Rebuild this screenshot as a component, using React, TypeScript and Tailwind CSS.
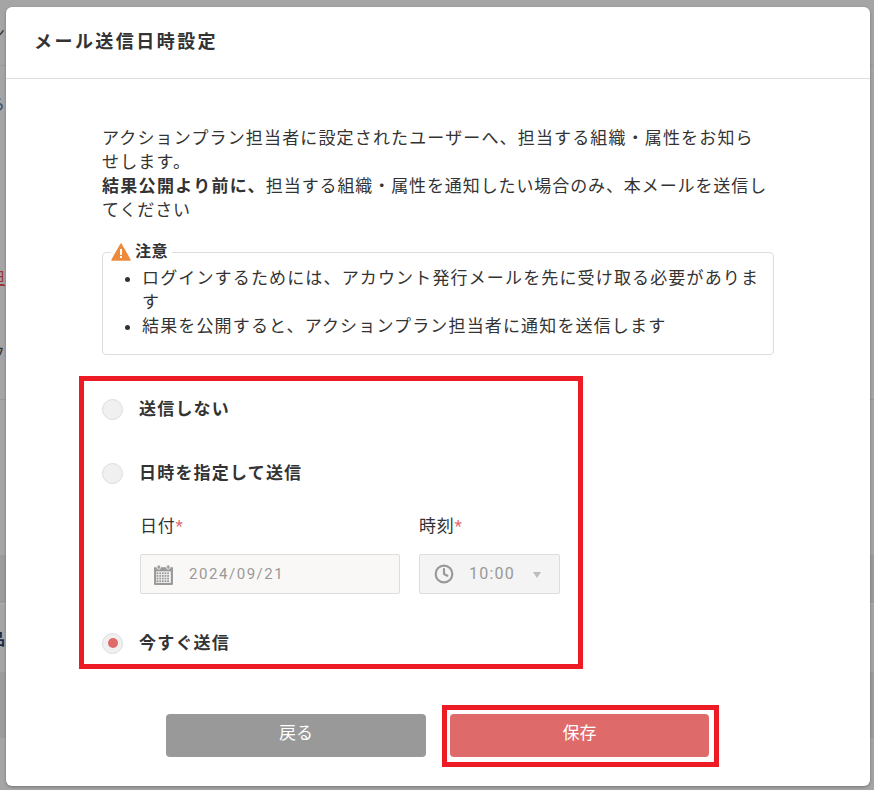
import React from 'react';
import { Clock } from 'lucide-react';

const font = 'font-["Roboto","Noto_Sans_CJK_JP",sans-serif]';

const Radio = ({ label, checked }: { label: string; checked?: boolean }) => (
  <div className="flex items-center">
    <span className="flex h-[21px] w-[21px] items-center justify-center rounded-full border border-[#dddddd] bg-[#f0f0f0]">
      {checked && <span className="h-[10px] w-[10px] rounded-full bg-[#df6a6a]" />}
    </span>
    <span className="ml-[16px] text-[17px] font-bold leading-[24px] tracking-[1.2px] text-[#333333]">{label}</span>
  </div>
);

const CalendarIcon = () => (
  <svg width="21" height="21" viewBox="0 0 20 20" className="shrink-0">
    <path d="M1 3h18v16a1 1 0 0 1-1 1H2a1 1 0 0 1-1-1z" fill="#999999" />
    <rect x="4" y="1" width="3" height="4" rx="1.2" fill="#999999" stroke="#f9f8f7" strokeWidth="0.8" />
    <rect x="13" y="1" width="3" height="4" rx="1.2" fill="#999999" stroke="#f9f8f7" strokeWidth="0.8" />
    <rect x="3" y="7" width="14" height="11" fill="#f4f4f4" />
    {[8, 10.5, 13, 15.5].map(y =>
      [3.5, 6, 8.5, 11, 13.5].map(x => <rect key={`${x}-${y}`} x={x} y={y} width="1.7" height="1.7" fill="#999999" />)
    )}
  </svg>
);

export default function App() {
  return (
    <div className={`relative h-[790px] w-[874px] overflow-hidden bg-[#a5a5a5] pt-[7px] ${font}`}>
      {/* page behind the dialog */}
      <div className="absolute left-0 top-[65px] h-px w-full bg-[#999999]" />
      <div className="absolute left-0 top-[399px] h-px w-full bg-[#999999]" />
      <div className="absolute left-0 top-[555px] h-[49px] w-full bg-[#9b9b9b]" />
      <div className="absolute left-0 top-[603px] h-px w-full bg-[#b0b0b0]" />
      <div className="absolute left-0 top-[672px] h-[66px] w-full bg-[#9c9c9c]" />
      <span className="absolute left-[-11px] top-[24px] text-[16px] leading-[20px] text-[#333333]">ン</span>
      <span className="absolute left-[-11px] top-[95px] text-[16px] leading-[20px] text-[#2b4a6b]">ら</span>
      <span className="absolute left-[-11px] top-[269px] text-[16px] leading-[20px] text-[#a03333] underline">担</span>
      <span className="absolute left-[-11px] top-[344px] text-[16px] leading-[20px] text-[#333333]">フ</span>
      <span className="absolute left-[-11px] top-[630px] text-[16px] font-bold leading-[20px] text-[#1e2a44]">品</span>

      <div className="relative ml-[6px] flex h-[779px] w-[864px] flex-col rounded-[6px] bg-white shadow-[0_1px_3px_rgba(0,0,0,0.3)]">
        <div className="flex h-[72px] shrink-0 items-center border-b border-[#dddddd] pb-[2px] pl-[28px]">
          <h1 className="text-[18px] font-bold tracking-[2.45px] text-[#333333]">メール送信日時設定</h1>
        </div>

        <div className="flex flex-1 flex-col pl-[96px] pr-[96px] pt-[47px]">
          <p className="w-[666px] text-[17px] leading-[24px] tracking-[1.15px] text-[#333333]">
            アクションプラン担当者に設定されたユーザーへ、担当する組織・属性をお知らせします。
            <br />
            <b className="tracking-[1.3px]">結果公開より前に、</b>
            <span className="tracking-[0.9px]">担当する組織・属性を通知したい場合のみ、本メールを送信してください</span>
          </p>

          <fieldset className="mt-[21px] h-[112px] rounded-[4px] border border-[#dddddd] pl-[8px] pr-[8px]">
            <legend className="flex h-[18px] items-center pr-[4px] text-[16px] font-bold leading-[18px] tracking-[0.5px] text-[#333333]">
              <svg width="20" height="18" viewBox="0 0 20 18" className="mr-[4px]">
                <path d="M10 1 L19 17 H1 Z" fill="#ee8a3c" stroke="#ee8a3c" strokeWidth="1.5" strokeLinejoin="round" />
                <rect x="9" y="6" width="2" height="6" fill="#ffffff" />
                <rect x="9" y="13" width="2" height="2" fill="#ffffff" />
              </svg>
              注意
            </legend>
            <ul className="mt-[5px] list-disc pl-[31px] text-[17px] leading-[24px] tracking-[1.15px] text-[#333333]">
              <li>ログインするためには、アカウント発行メールを先に受け取る必要があります</li>
              <li>結果を公開すると、アクションプラン担当者に通知を送信します</li>
            </ul>
          </fieldset>

          <div className="mt-[42px]">
            <Radio label="送信しない" />
          </div>
          <div className="mt-[40px]">
            <Radio label="日時を指定して送信" />
          </div>

          <div className="ml-[38px] mt-[29px] flex gap-[19px]">
            <div className="w-[260px]">
              <label className="block text-[17px] leading-[24px] tracking-[0.8px] text-[#333333]">
                日付<span className="text-[#df6a6a]">*</span>
              </label>
              <div className="mt-[16px] flex h-[40px] items-center rounded-[2px] border border-[#dddddd] bg-[#f9f8f7] pl-[12px]">
                <CalendarIcon />
                <span className="ml-[15px] text-[15px] tracking-[1.55px] text-[#999999]">2024/09/21</span>
              </div>
            </div>
            <div className="w-[141px]">
              <label className="block text-[17px] leading-[24px] tracking-[0.8px] text-[#333333]">
                時刻<span className="text-[#df6a6a]">*</span>
              </label>
              <div className="mt-[16px] flex h-[40px] items-center rounded-[2px] border border-[#dddddd] bg-[#f4f4f4] pl-[14px]">
                <Clock size={20} strokeWidth={2.6} className="text-[#999999]" />
                <span className="ml-[15px] text-[16px] tracking-[1.2px] text-[#999999]">10:00</span>
                <span className="ml-[18px] mt-[2px] h-0 w-0 border-x-[4px] border-t-[6px] border-x-transparent border-t-[#bbbbbb]" />
              </div>
            </div>
          </div>

          <div className="mt-[37px]">
            <Radio label="今すぐ送信" checked />
          </div>

          <div className="ml-[64px] mt-[59px] flex gap-[24px]">
            <button className="h-[43px] w-[260px] rounded-[4px] bg-[#999999] pb-[3px] text-[17px] text-white">戻る</button>
            <button className="h-[43px] w-[259px] rounded-[4px] bg-[#df6a6a] pb-[3px] text-[17px] text-white">保存</button>
          </div>
        </div>
      </div>

      {/* red annotation frames */}
      <div className="absolute left-[79px] top-[376px] h-[293px] w-[504px] border-[5px] border-[#ed1c24]" />
      <div className="absolute left-[442px] top-[705px] h-[62px] w-[277px] border-[5px] border-[#ed1c24]" />
    </div>
  );
}
